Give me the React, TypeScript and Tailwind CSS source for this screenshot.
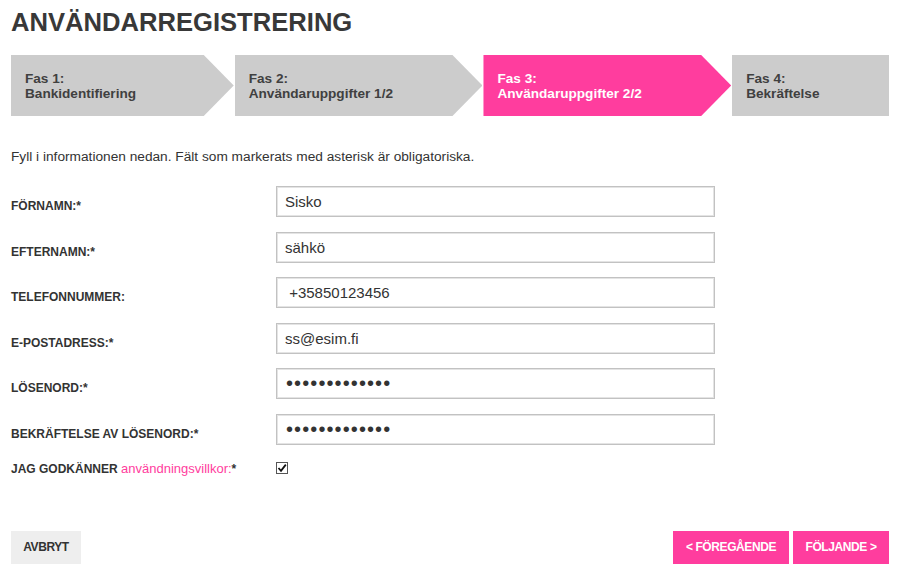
const steps = [
  { fas: "Fas 1:", name: "Bankidentifiering", width: "w-[223px]", active: false, arrow: true },
  { fas: "Fas 2:", name: "Användaruppgifter 1/2", width: "w-[248px]", active: false, arrow: true },
  { fas: "Fas 3:", name: "Användaruppgifter 2/2", width: "w-[248px]", active: true, arrow: true },
  { fas: "Fas 4:", name: "Bekräftelse", width: "w-[157px]", active: false, arrow: false },
];

const fields = [
  { label: "FÖRNAMN:*", value: "Sisko" },
  { label: "EFTERNAMN:*", value: "sähkö" },
  { label: "TELEFONNUMMER:", value: " +35850123456" },
  { label: "E-POSTADRESS:*", value: "ss@esim.fi" },
  { label: "LÖSENORD:*", value: "•••••••••••••", password: true },
  { label: "BEKRÄFTELSE AV LÖSENORD:*", value: "•••••••••••••", password: true },
];

const Step = ({ step }: { step: (typeof steps)[number] }) => {
  return (
    <div
      className={`${step.width} h-[61px] flex items-center pl-[14px] ${
        step.arrow
          ? "[clip-path:polygon(0_0,calc(100%_-_30px)_0,100%_50%,calc(100%_-_30px)_100%,0_100%)]"
          : ""
      } ${step.active ? "bg-[#ff3d9e] text-white" : "bg-[#cccccc] text-[#404040]"}`}
    >
      <div className="pt-[1px] text-[13.6px] leading-[15px] font-bold">
        <div>{step.fas}</div>
        <div>{step.name}</div>
      </div>
    </div>
  );
};

export default function App() {
  return (
    <div className="w-[900px] h-[573px] bg-white px-[11px] text-[#333333] font-['Liberation_Sans',Arial,sans-serif] overflow-hidden">
      <h1 className="mt-[7px] text-[25.6px] leading-[30px] font-bold text-[#383838]">ANVÄNDARREGISTRERING</h1>

      {/* steps */}
      <div className="mt-[18px] flex gap-[1px]">
        {steps.map((s) => (
          <Step key={s.fas} step={s} />
        ))}
      </div>

      <p className="mt-[33px] text-[13.7px] leading-[16px]">
        Fyll i informationen nedan. Fält som markerats med asterisk är obligatoriska.
      </p>

      <div className="mt-[21px] flex flex-col gap-[14.5px]">
        {fields.map((f) => (
          <div key={f.label} className="flex items-center h-[31px]">
            <label className="w-[265px] pt-[9px] text-[12px] font-bold leading-[14px]">{f.label}</label>
            <input
              readOnly
              defaultValue={f.value}
              className={`w-[439px] h-[31px] border border-[#c2c2c2] shadow-[inset_0_0_0_1px_#e4e4e4] px-[8px] outline-none text-[#333333] ${
                f.password ? "text-[20px] tracking-[1.1px] pl-[9px]" : "text-[15px]"
              }`}
            />
          </div>
        ))}
      </div>

      <div className="mt-[17px] flex items-center h-[12px]">
        <div className="w-[265px] pt-[2px] text-[12px] font-bold leading-[14px]">
          JAG GODKÄNNER <span className="text-[#ff3d9e] font-normal text-[13px]">användningsvillkor:</span>*
        </div>
        <div className="w-[12px] h-[12px] border border-[#555555] bg-white flex items-center justify-center">
          <svg width="10" height="10" viewBox="0 0 10 10">
            <path d="M1.5 5 L4 7.8 L8.8 1.6" fill="none" stroke="#111111" strokeWidth="1.8" />
          </svg>
        </div>
      </div>

      <div className="mt-[57px] flex justify-between">
        <button className="w-[70px] h-[33px] bg-[#eeeeee] text-[12px] font-bold tracking-[-0.4px] text-[#333333]">
          AVBRYT
        </button>
        <div className="flex gap-[4px]">
          <button className="w-[116px] h-[33px] bg-[#ff3d9e] text-white text-[12px] font-bold tracking-[-0.4px]">
            &lt; FÖREGÅENDE
          </button>
          <button className="w-[96px] h-[33px] bg-[#ff3d9e] text-white text-[12px] font-bold tracking-[-0.4px]">
            FÖLJANDE &gt;
          </button>
        </div>
      </div>
    </div>
  );
}
